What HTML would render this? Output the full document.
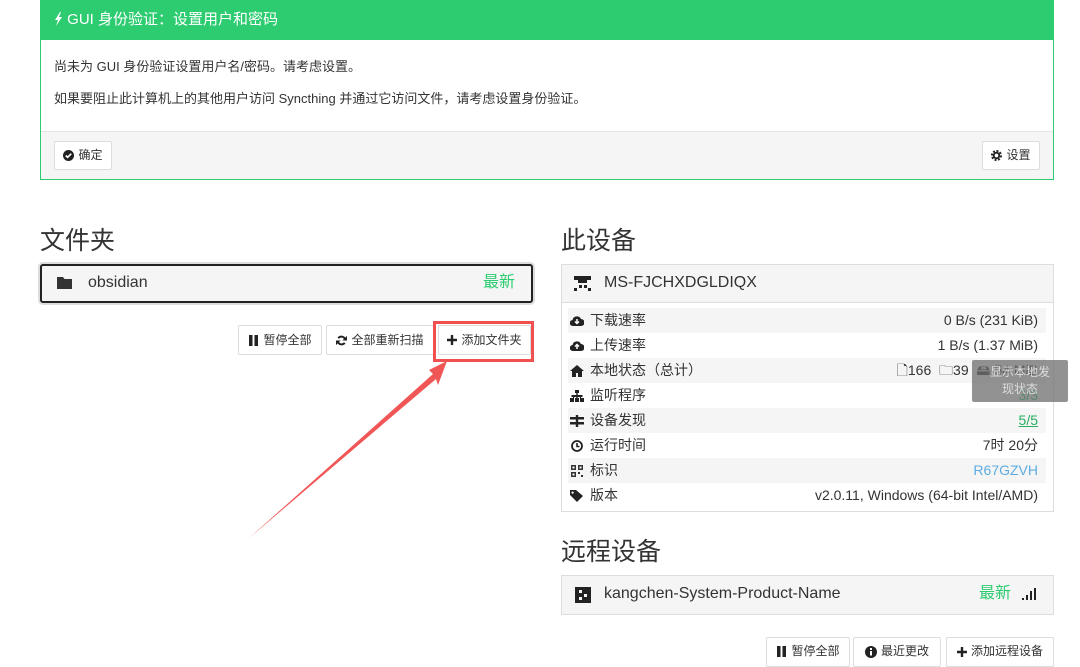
<!DOCTYPE html>
<html><head><meta charset="utf-8">
<style>
*{box-sizing:border-box;margin:0;padding:0}
body{width:1080px;height:658px;overflow:hidden;background:#fff;font-family:"Liberation Sans","Noto Sans CJK SC",sans-serif;color:#333;position:relative;font-size:13px;line-height:1.2}
.a{position:absolute}
.t{position:absolute;height:20px;line-height:20px}
.btn{position:absolute;border:1px solid #ddd;background:#fff;font-size:12px;color:#333;display:flex;align-items:center;justify-content:center;gap:4px;border-radius:2px}
.row{position:absolute;left:568px;width:478px;height:25px;font-size:14px;display:flex;align-items:center;padding:0 8px 0 2px;line-height:25px}
.row .r{margin-left:auto}
.row.s{background:#f5f5f5}
.row svg{margin-right:6px;flex:none}
h2{position:absolute;font-weight:normal;font-size:25px;color:#333;line-height:32px}
</style></head><body>
<div class="a" style="left:40px;top:0;width:1014px;height:180px;border:1px solid #2ecc71;background:#fff"></div>
<div class="a" style="left:40px;top:0;width:1014px;height:40px;background:#2ecc71;color:#fff;font-size:15px;padding:0 0 0 14px;line-height:40px">
<svg width="9" height="14" viewBox="0 0 9 14" style="vertical-align:-2px"><path d="M6 0L1 8h3l-2 6 6-9H5l2-5z" fill="#fff"/></svg> GUI 身份验证：设置用户和密码</div>
<div class="t" style="left:54px;top:57px;font-size:13px">尚未为 GUI 身份验证设置用户名/密码。请考虑设置。</div>
<div class="t" style="left:54px;top:89px;font-size:13px">如果要阻止此计算机上的其他用户访问 Syncthing 并通过它访问文件，请考虑设置身份验证。</div>
<div class="a" style="left:41px;top:131px;width:1012px;height:48px;background:#f5f5f5;border-top:1px solid #e5e5e5"></div>
<div class="btn" style="left:54px;top:141px;width:58px;height:29px"><svg width="11" height="11" viewBox="0 0 12 12"><circle cx="6" cy="6" r="6" fill="#222"/><path d="M3 6l2 2 4-4" stroke="#fff" stroke-width="1.8" fill="none"/></svg>确定</div>
<div class="btn" style="left:982px;top:141px;width:58px;height:29px"><svg width="11" height="11" viewBox="0 0 12 12"><circle cx="6" cy="6" r="4.5" fill="none" stroke="#222" stroke-width="3" stroke-dasharray="2 1.5"/><circle cx="6" cy="6" r="3" fill="none" stroke="#222" stroke-width="2"/></svg>设置</div>

<h2 style="left:40px;top:225px">文件夹</h2>
<div class="a" style="left:40px;top:264px;width:493px;height:39px;background:#f5f5f5;border:2px solid #222;border-radius:3px;box-shadow:0 0 0 2px #ddd"></div>
<svg class="a" style="left:57px;top:276px" width="15" height="13" viewBox="0 0 15 13"><path d="M0 1h6l1.5 2H15v10H0z" fill="#333"/></svg>
<div class="t" style="left:88px;top:273px;font-size:16px">obsidian</div>
<div class="t" style="left:483px;top:273px;font-size:16px;color:#2ecc71">最新</div>
<div class="btn" style="left:238px;top:325px;width:84px;height:30px"><svg width="11" height="11" viewBox="0 0 11 11"><path d="M1 0h3.5v11H1zM6.5 0H10v11H6.5z" fill="#222"/></svg>暂停全部</div>
<div class="btn" style="left:326px;top:325px;width:108px;height:30px"><svg width="11" height="11" viewBox="0 0 12 12"><path d="M10 5A4.2 4.2 0 0 0 2.5 3.5M2 7a4.2 4.2 0 0 0 7.5 1.5" stroke="#222" stroke-width="2.2" fill="none"/><path d="M12 1v5H7zM0 11V6h5z" fill="#222"/></svg>全部重新扫描</div>
<div class="btn" style="left:438px;top:325px;width:93px;height:30px"><svg width="10" height="10" viewBox="0 0 10 10"><path d="M3.8 0h2.4v10H3.8zM0 3.8h10v2.4H0z" fill="#222"/></svg>添加文件夹</div>
<div class="a" style="left:433px;top:321px;width:101px;height:41px;border:3px solid #f05050"></div>
<svg class="a" style="left:0;top:0" width="1080" height="658"><path d="M248 539L433 374L429 370L447 361L438 385L436 379Z" fill="#f05656"/></svg>

<h2 style="left:561px;top:225px">此设备</h2>
<div class="a" style="left:561px;top:264px;width:493px;height:248px;border:1px solid #ddd;background:#fff"></div>
<div class="a" style="left:562px;top:265px;width:491px;height:38px;background:#f5f5f5;border-bottom:1px solid #ddd"></div>
<svg class="a" style="left:574px;top:276px" width="17" height="15" viewBox="0 0 17 15"><path d="M0 0h17v4h-4v3H4V4H0zM5 9h3v3H5zM10 9h3v3h-3zM0 12h3v3H0zM14 12h3v3h-3z" fill="#222"/></svg>
<div class="t" style="left:604px;top:273px;font-size:16px">MS-FJCHXDGLDIQX</div>
<div class="row s" style="top:308px"><svg width="14" height="12" viewBox="0 0 14 12"><path d="M3 11a3 3 0 0 1-.5-6A4.5 4.5 0 0 1 11 4a3.5 3.5 0 0 1 0 7z" fill="#222"/><path d="M7 4v4M5 6.5l2 2 2-2" stroke="#fff" stroke-width="1.5" fill="none"/></svg>下载速率<span class="r">0 B/s (231 KiB)</span></div>
<div class="row" style="top:333px"><svg width="14" height="12" viewBox="0 0 14 12"><path d="M3 11a3 3 0 0 1-.5-6A4.5 4.5 0 0 1 11 4a3.5 3.5 0 0 1 0 7z" fill="#222"/><path d="M7 9V5M5 6.5l2-2 2 2" stroke="#fff" stroke-width="1.5" fill="none"/></svg>上传速率<span class="r">1 B/s (1.37 MiB)</span></div>
<div class="row s" style="top:358px"><svg width="14" height="12" viewBox="0 0 14 12"><path d="M7 0L0 6h2v6h4V8h2v4h4V6h2z" fill="#222"/></svg>本地状态（总计）<span class="r">🗋166 &nbsp;🗀39 &nbsp;🖴 54 MiB</span></div>
<div class="row" style="top:383px"><svg width="14" height="12" viewBox="0 0 14 12"><path d="M5 0h4v3H5zM6.3 3h1.4v2H6.3zM1.5 5h11v2H11V8H9.8V7H7.7v1H6.3V7H4.2v1H3V7H1.5zM0 8h4v4H0zM5 8h4v4H5zM10 8h4v4h-4z" fill="#222"/></svg>监听程序<span class="r" style="color:#2ecc71">3/3</span></div>
<div class="row s" style="top:408px"><svg width="14" height="12" viewBox="0 0 14 12"><path d="M0 2h14v2.5H0zM0 7h14v2.5H0zM5.8 0h2.4v12H5.8z" fill="#222"/></svg>设备发现<span class="r" style="color:#27ae60;text-decoration:underline">5/5</span></div>
<div class="row" style="top:433px"><svg width="14" height="12" viewBox="0 0 14 12"><circle cx="7" cy="6" r="5" stroke="#222" stroke-width="1.8" fill="none"/><path d="M7 3v3.5H9.5" stroke="#222" stroke-width="1.6" fill="none"/></svg>运行时间<span class="r">7时 20分</span></div>
<div class="row s" style="top:458px"><svg width="14" height="12" viewBox="0 0 14 12"><path d="M1 0h5v5H1zM8 0h5v5H8zM1 7h5v5H1zM8 7h2v2H8zM11 10h2v2h-2z" fill="#333"/><path d="M2.5 1.5h2v2h-2zM9.5 1.5h2v2h-2zM2.5 8.5h2v2h-2z" fill="#fff"/></svg>标识<span class="r" style="color:#5dade2">R67GZVH</span></div>
<div class="row" style="top:483px"><svg width="14" height="12" viewBox="0 0 14 12"><path d="M0 0h6l7 6-6 6-7-7z" fill="#222"/><circle cx="2.6" cy="2.6" r="1.1" fill="#fff"/></svg>版本<span class="r">v2.0.11, Windows (64-bit Intel/AMD)</span></div>
<div class="a" style="left:972px;top:360px;width:96px;height:42px;background:rgba(110,110,110,.75);color:#ddd;font-size:12px;text-align:center;line-height:17px;padding-top:4px;border-radius:2px">显示本地发<br>现状态</div>

<h2 style="left:561px;top:536px">远程设备</h2>
<div class="a" style="left:561px;top:575px;width:493px;height:40px;background:#f5f5f5;border:1px solid #ddd"></div>
<svg class="a" style="left:575px;top:587px" width="16" height="16" viewBox="0 0 16 16"><path d="M0 0h16v16H0z" fill="#222"/><path d="M4 3h3v3H4zM9 7h3v3H9zM4 10h3v3H4z" fill="#f5f5f5"/></svg>
<div class="t" style="left:604px;top:584px;font-size:16px">kangchen-System-Product-Name</div>
<div class="t" style="left:979px;top:584px;font-size:16px;color:#2ecc71">最新</div>
<svg class="a" style="left:1022px;top:588px" width="14" height="12" viewBox="0 0 14 12"><path d="M0 10h2v2H0zM4 7h2v5H4zM8 3h2v9H8zM12 0h2v12h-2z" fill="#222"/></svg>
<div class="btn" style="left:766px;top:637px;width:84px;height:30px;align-items:flex-start;padding-top:6px"><svg width="11" height="11" viewBox="0 0 11 11" style="margin-top:2px"><path d="M1 0h3.5v11H1zM6.5 0H10v11H6.5z" fill="#222"/></svg>暂停全部</div>
<div class="btn" style="left:853px;top:637px;width:88px;height:30px;align-items:flex-start;padding-top:6px"><svg width="12" height="12" viewBox="0 0 12 12" style="margin-top:2px"><circle cx="6" cy="6" r="6" fill="#222"/><path d="M5 5h2v4.5H5zM5 2h2v2H5z" fill="#fff"/></svg>最近更改</div>
<div class="btn" style="left:946px;top:637px;width:108px;height:30px;align-items:flex-start;padding-top:6px"><svg width="10" height="10" viewBox="0 0 10 10" style="margin-top:3px"><path d="M3.8 0h2.4v10H3.8zM0 3.8h10v2.4H0z" fill="#222"/></svg>添加远程设备</div>
</body></html>
